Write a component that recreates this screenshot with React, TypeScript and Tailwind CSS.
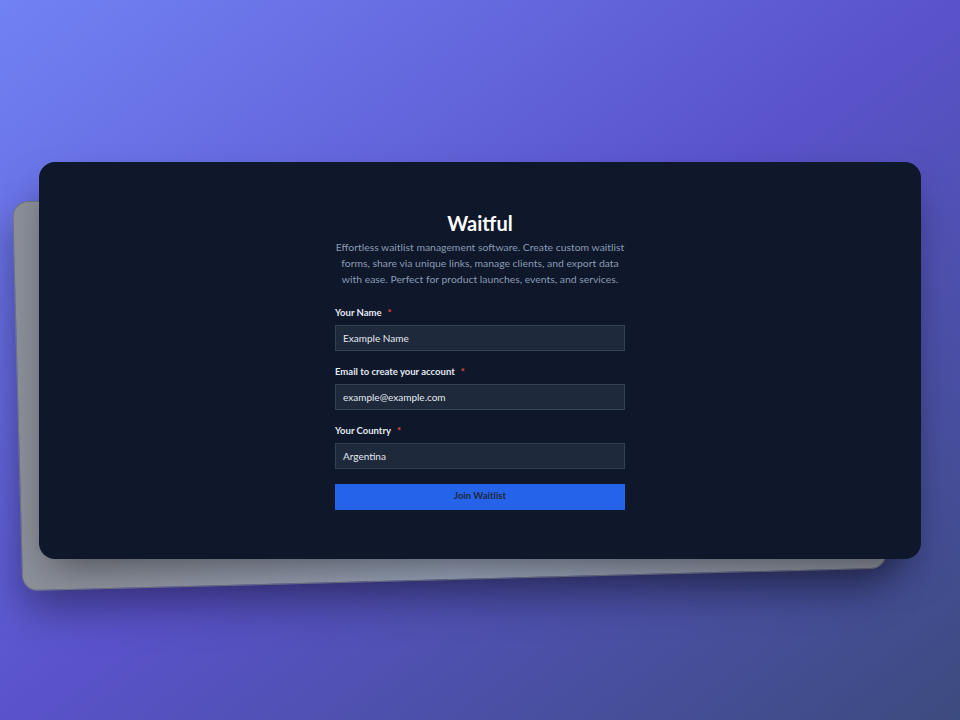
import React from "react";

const fields = [
  { label: "Your Name", value: "Example Name", type: "text" },
  { label: "Email to create your account", value: "example@example.com", type: "email" },
  { label: "Your Country", value: "Argentina", type: "text" },
];

export default function App() {
  return (
    <div className="min-h-screen w-full flex items-center justify-center bg-linear-to-br from-[#7182f3] via-[#5a52cb] to-[#3c4b7f] font-['Lato',sans-serif]">
      <div className="relative w-[882px]">
        {/* tilted card behind */}
        <div className="absolute left-[-22px] top-[28px] w-[865px] h-[390px] rotate-[-1.5deg] rounded-2xl border border-[#70747e] bg-linear-to-r from-[#8c9099] via-[#99a4bb] to-[#9095a1] shadow-[0_20px_40px_rgba(0,0,0,0.35)]" />

        {/* main card */}
        <div className="relative h-[397px] rounded-2xl bg-[#0f172a] flex flex-col items-center justify-center shadow-[0_18px_40px_-12px_rgba(0,0,0,0.5)]">
          <div className="w-[290px]">
            <h1 className="text-center text-[20px] leading-[24px] font-bold text-white">
              Waitful
            </h1>
            <p className="mt-1 text-center text-[10.4px] leading-[16px] text-[#8b9bb4]">
              Effortless waitlist management software. Create custom waitlist
              forms, share via unique links, manage clients, and export data
              with ease. Perfect for product launches, events, and services.
            </p>

            <form className="mt-5 flex flex-col gap-[15px]">
              {fields.map((f) => (
                <div key={f.label}>
                  <label className="flex items-center text-[9.5px] leading-[12px] font-bold text-[#e2e8f0]">
                    {f.label}
                    <span className="ml-[6px] text-[#ef4444]">*</span>
                  </label>
                  <input
                    type={f.type}
                    defaultValue={f.value}
                    readOnly
                    className="mt-1.5 block h-[26px] w-full border border-[#334155] bg-[#1e293b] px-[7px] text-[10px] text-[#e2e8f0] outline-none"
                  />
                </div>
              ))}
              <button
                type="button"
                className="h-[26px] w-full bg-[#2563eb] text-[9.5px] font-bold text-[#1e293b]"
              >
                Join Waitlist
              </button>
            </form>
          </div>
        </div>
      </div>
    </div>
  );
}
